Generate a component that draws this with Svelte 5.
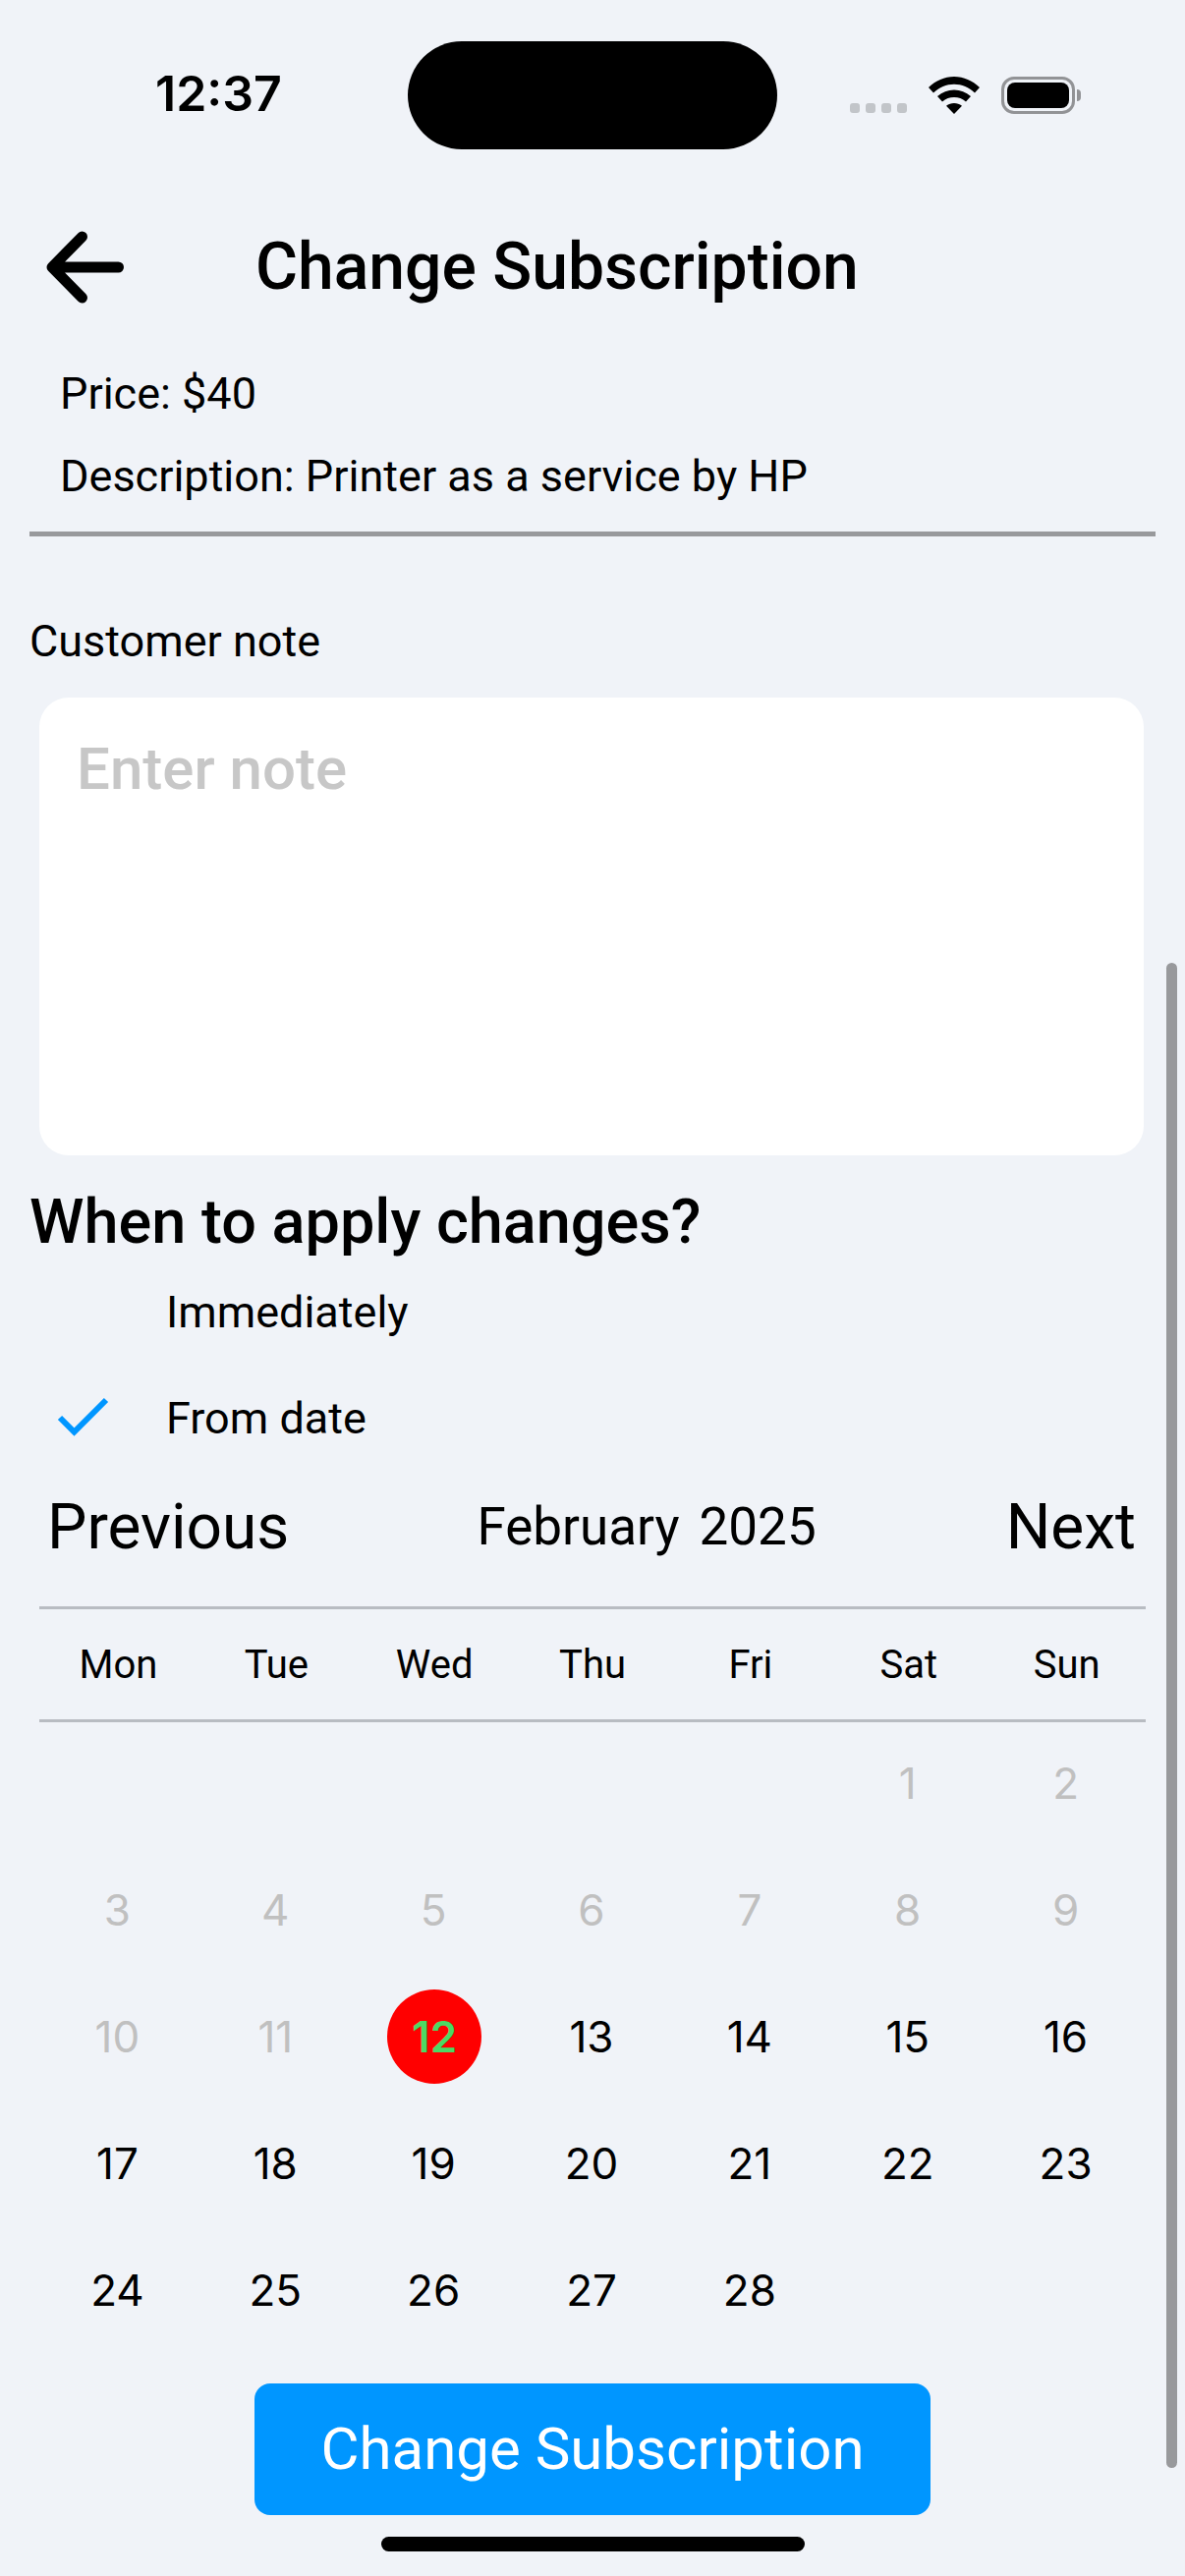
<script lang="ts">
	const weekdays = ["Mon", "Tue", "Wed", "Thu", "Fri", "Sat", "Sun"];
	const days: (number | null)[] = [null, null, null, null, null];
	for (let d = 1; d <= 28; d++) days.push(d);

	function dayClass(d: number | null) {
		if (d === null) return "day";
		if (d === 12) return "day today";
		return d < 12 ? "day past" : "day";
	}
</script>

<div class="screen">
	<div class="status">
		<span class="time">12:37</span>
		<div class="island"></div>
		<div class="indicators">
			<div class="dots"><i></i><i></i><i></i><i></i></div>
			<svg class="wifi" width="52" height="38" viewBox="0 0 52 38">
				<path d="M26 0C16 0 7.500 4 0 11l5 5.500C11 11 18 7.800 26 7.800S41 11 47 16.500L52 11C44.500 4 36 0 26 0Z" fill="#000" />
				<path d="M26 13.500c-6.500 0-12 2.400-17 6.500l5 5.400c3.500-2.800 7.500-4.300 12-4.300s8.500 1.500 12 4.300l5-5.400c-5-4.100-10.500-6.500-17-6.500Z" fill="#000" />
				<path d="M26 27c-3 0-5.500 1-8 2.800L26 38l8-8.200C31.500 28 29 27 26 27Z" fill="#000" />
			</svg>
			<div class="battery"><div class="charge"></div></div>
			<div class="nub"></div>
		</div>
	</div>

	<header class="top">
		<svg class="back" width="80" height="74" viewBox="0 0 80 74">
			<path d="M74.500 37H8M37.500 6 7 37l30.500 31" fill="none" stroke="#000" stroke-width="11" stroke-linecap="round" stroke-linejoin="round" />
		</svg>
		<h1>Change Subscription</h1>
	</header>

	<div class="info">
		<p>Price: $40</p>
		<p>Description: Printer as a service by HP</p>
	</div>
	<div class="rule"></div>

	<div class="note-label">Customer note</div>
	<div class="note">Enter note</div>

	<h2>When to apply changes?</h2>
	<div class="option">
		<span class="check"></span>
		<span>Immediately</span>
	</div>
	<div class="option second">
		<span class="check">
			<svg width="54" height="42" viewBox="0 0 54 42">
				<path d="M3 21 17.500 35.500 50 3" fill="none" stroke="#0096ff" stroke-width="6" />
			</svg>
		</span>
		<span>From date</span>
	</div>

	<div class="cal-head">
		<button>Previous</button>
		<span class="month"><span>February</span><span>2025</span></span>
		<button>Next</button>
	</div>
	<div class="weekdays">
		{#each weekdays as w}
			<span>{w}</span>
		{/each}
	</div>
	<div class="days">
		{#each days as d}
			<div class={dayClass(d)}>
				{#if d}<span>{d}</span>{/if}
			</div>
		{/each}
	</div>

	<div class="action">
		<button class="submit">Change Subscription</button>
	</div>
	<div class="home"></div>

	<div class="scrollbar"></div>
</div>

<style>
	:global(body) {
		margin: 0;
		background: #f0f3f8;
	}

	.screen {
		position: relative;
		width: 1206px;
		height: 2622px;
		overflow: hidden;
		background: #f0f3f8;
		color: #000;
		font-family: Roboto, "Liberation Sans", sans-serif;
	}

	.status {
		display: flex;
		align-items: flex-start;
		height: 190px;
		padding-top: 42px;
		box-sizing: border-box;
	}

	.time {
		width: 415px;
		box-sizing: border-box;
		padding: 24px 0 0 158px;
		font-family: Inter, sans-serif;
		font-size: 50px;
		line-height: 58px;
		font-weight: 600;
	}

	.island {
		width: 376px;
		height: 110px;
		border-radius: 55px;
		background: #000;
	}

	.indicators {
		display: flex;
		align-items: flex-end;
		margin-left: 74px;
		height: 74px;
	}

	.dots {
		display: flex;
		gap: 6px;
		margin-bottom: 1px;
	}

	.dots i {
		width: 10px;
		height: 10px;
		border-radius: 3px;
		background: #c2c5c9;
	}

	.wifi {
		margin-left: 22px;
	}

	.battery {
		margin-left: 22px;
		width: 75px;
		height: 38px;
		box-sizing: border-box;
		border: 3px solid #929396;
		border-radius: 13px;
		padding: 3px;
	}

	.charge {
		height: 100%;
		border-radius: 8px;
		background: #000;
	}

	.nub {
		width: 4px;
		height: 12px;
		margin: 0 0 13px 2px;
		border-radius: 0 4px 4px 0;
		background: #929396;
	}

	.top {
		display: flex;
		align-items: center;
		height: 74px;
		padding: 45px 0 0 46px;
	}

	.back {
		flex: none;
	}

	h1 {
		margin: 0 0 0 134px;
		font-size: 66px;
		line-height: 74px;
		font-weight: 500;
	}

	.info {
		padding: 64px 0 0 61px;
	}

	.info p {
		margin: 0 0 28px;
		font-size: 45px;
		line-height: 56px;
	}

	.rule {
		height: 5px;
		margin: 3px 30px 0;
		background: #98999c;
	}

	.note-label {
		margin: 79px 0 0 30px;
		font-size: 45px;
		line-height: 56px;
	}

	.note {
		height: 466px;
		margin: 29px 42px 0 40px;
		padding: 39px 38px;
		box-sizing: border-box;
		border-radius: 30px;
		background: #fff;
		color: #c7c7c7;
		font-size: 60px;
		line-height: 68px;
		font-weight: 500;
	}

	h2 {
		margin: 31px 0 0 30px;
		font-size: 63px;
		line-height: 74px;
		font-weight: 500;
	}

	.option {
		display: flex;
		align-items: center;
		height: 56px;
		margin-top: 26px;
		padding-left: 58px;
		font-size: 45px;
	}

	.option.second {
		margin-top: 52px;
	}

	.check {
		width: 111px;
		display: flex;
	}

	.cal-head {
		display: flex;
		align-items: center;
		justify-content: space-between;
		height: 80px;
		margin-top: 43px;
		padding: 0 50px 0 48px;
	}

	.cal-head button {
		padding: 0;
		border: 0;
		background: none;
		font: inherit;
		font-size: 64px;
		color: #000;
	}

	.month {
		display: flex;
		gap: 20px;
		margin-left: -2px;
		font-size: 53px;
	}

	.weekdays {
		display: grid;
		grid-template-columns: repeat(7, 1fr);
		height: 112px;
		margin: 41px 40px 0;
		border-top: 3px solid #b8bcc2;
		border-bottom: 3px solid #b8bcc2;
		align-items: center;
		text-align: center;
		font-size: 40px;
	}

	.days {
		display: grid;
		grid-template-columns: repeat(7, 1fr);
		grid-auto-rows: 128.800px;
		margin: -2px 41px 0 39px;
		font-family: Inter, sans-serif;
		font-size: 44px;
	}

	.day {
		display: flex;
		align-items: center;
		justify-content: center;
	}

	.day.past {
		color: #c0c0c0;
	}

	.day.today span {
		display: flex;
		align-items: center;
		justify-content: center;
		width: 96px;
		height: 96px;
		margin-left: 2px;
		border-radius: 50%;
		background: #ff0000;
		color: #4cd964;
		font-weight: 600;
	}

	.action {
		display: flex;
		justify-content: center;
		margin-top: 31px;
	}

	.submit {
		width: 688px;
		height: 134px;
		border: 0;
		border-radius: 16px;
		background: #0096ff;
		color: #fff;
		font: inherit;
		font-size: 60px;
	}

	.home {
		width: 431px;
		height: 15px;
		margin: 22px 0 0 388px;
		border-radius: 8px;
		background: #000;
	}

	.scrollbar {
		position: absolute;
		top: 980px;
		right: 8px;
		width: 11px;
		height: 1532px;
		border-radius: 6px;
		background: #98999c;
	}
</style>
